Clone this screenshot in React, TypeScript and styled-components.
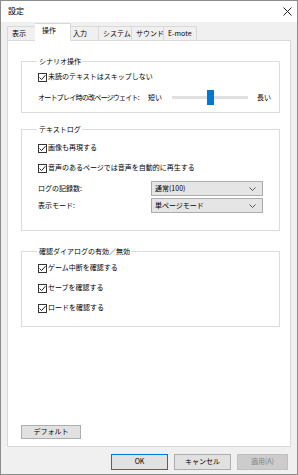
import styled, { createGlobalStyle } from 'styled-components';

const GlobalStyle = createGlobalStyle`
  html, body {
    margin: 0;
    padding: 0;
    background: #ffffff;
  }
  * {
    box-sizing: border-box;
  }
`;

const Window = styled.div`
  width: 298px;
  height: 475px;
  border: 1px solid #8c8c8c;
  background: #f0f0f0;
  display: flex;
  flex-direction: column;
  font-family: 'Noto Sans CJK JP', 'Noto Sans', sans-serif;
  font-size: 7px;
  line-height: 1.3;
  white-space: nowrap;
  color: #000;
`;

const TitleBar = styled.div`
  height: 21px;
  background: #ffffff;
  display: flex;
  align-items: center;
  justify-content: space-between;
  padding: 0 5px 0 7px;
  font-size: 8px;
`;

const CloseIcon = () => (
  <svg width="9" height="9" viewBox="0 0 9 9">
    <path d="M0.5 0.5 L8.5 8.5 M8.5 0.5 L0.5 8.5" stroke="#222" strokeWidth="1" />
  </svg>
);

const TabBar = styled.div`
  display: flex;
  align-items: flex-end;
  height: 18px;
  margin-top: 1px;
  padding-left: 6px;
  position: relative;
  z-index: 1;
`;

const Tab = styled.div<{ $active?: boolean; $w: number }>`
  width: ${(p) => p.$w}px;
  height: ${(p) => (p.$active ? 18 : 15)}px;
  margin: ${(p) => (p.$active ? '0 -2px' : '0')};
  border: 1px solid #d9d9d9;
  border-bottom: ${(p) => (p.$active ? '1px solid #ffffff' : '1px solid #d9d9d9')};
  background: ${(p) => (p.$active ? '#ffffff' : '#f0f0f0')};
  display: flex;
  align-items: center;
  padding-left: ${(p) => (p.$active ? 7 : 4)}px;
  padding-bottom: ${(p) => (p.$active ? 2 : 0)}px;
  position: relative;
  z-index: ${(p) => (p.$active ? 2 : 1)};
  & + & {
    border-left: ${(p) => (p.$active ? '1px solid #d9d9d9' : 'none')};
  }
`;

const Panel = styled.div`
  margin: -1px 6px 0 6px;
  height: 407px;
  background: #ffffff;
  border: 1px solid #d9d9d9;
  display: flex;
  flex-direction: column;
  padding: 15px 10px 7px 13px;
`;

const Group = styled.fieldset<{ $pt?: number; $pb: number; $mt?: number }>`
  margin: ${(p) => p.$mt ?? 0}px 0 0 0;
  border: 1px solid #dcdcdc;
  padding: ${(p) => p.$pt ?? 4}px 8px ${(p) => p.$pb}px 16px;
  display: flex;
  flex-direction: column;
  gap: 6px;
  min-width: 0;
`;

const Legend = styled.legend`
  padding: 0 1px 0 2px;
  margin-left: -1px;
  height: 10px;
  line-height: 10px;
`;

const Row = styled.div<{ $h?: number }>`
  display: flex;
  align-items: center;
  height: ${(p) => p.$h ?? 14}px;
`;

const Box = styled.span`
  width: 9px;
  height: 9px;
  border: 1px solid #333;
  background: #fff;
  display: inline-flex;
  align-items: center;
  justify-content: center;
  margin-right: 1px;
  flex: none;
`;

const Check = ({ label }: { label: string }) => (
  <Row>
    <Box>
      <svg width="7" height="7" viewBox="0 0 7 7">
        <path d="M0.6 3.6 L2.6 5.6 L6.4 1.2" stroke="#222" strokeWidth="1" fill="none" />
      </svg>
    </Box>
    {label}
  </Row>
);

const SliderLabel = styled.span`
  flex: none;
  letter-spacing: -0.75px;
  margin-right: 9px;
`;

const Track = styled.div`
  width: 76px;
  height: 15px;
  margin: 0 9px 0 10px;
  display: flex;
  align-items: center;
  position: relative;
  &::before {
    content: '';
    flex: 1;
    height: 3px;
    background: #e0e0e0;
  }
`;

const Thumb = styled.div`
  position: absolute;
  top: 0;
  width: 7px;
  height: 15px;
  background: #0078d7;
`;

const FieldLabel = styled.span`
  width: 113px;
`;

const Select = styled.div`
  width: 112px;
  height: 15px;
  background: #e5e5e5;
  border: 1px solid #acacac;
  display: flex;
  align-items: center;
  justify-content: space-between;
  padding: 0 6px 0 3px;
`;

const Chevron = () => (
  <svg width="7" height="4" viewBox="0 0 7 4">
    <path d="M0.5 0.5 L3.5 3.5 L6.5 0.5" stroke="#555" strokeWidth="1" fill="none" />
  </svg>
);

const Button = styled.div<{ $variant?: 'default' | 'primary' | 'disabled'; $w?: number }>`
  width: ${(p) => p.$w ?? 57}px;
  height: 16px;
  background: ${(p) => (p.$variant === 'disabled' ? '#cccccc' : '#e1e1e1')};
  border: ${(p) =>
    p.$variant === 'primary'
      ? '1.5px solid #0078d7'
      : p.$variant === 'disabled'
        ? '1px solid #bfbfbf'
        : '1px solid #adadad'};
  color: ${(p) => (p.$variant === 'disabled' ? '#838383' : '#000')};
  display: flex;
  align-items: center;
  justify-content: center;
`;

const DefaultButton = styled(Button)`
  margin-top: auto;
  height: 14px;
`;

const Footer = styled.div`
  display: flex;
  justify-content: flex-end;
  gap: 6px;
  padding: 7px 9px 0 0;
`;

export default function App() {
  return (
    <>
      <GlobalStyle />
      <Window>
        <TitleBar>
          <span>設定</span>
          <CloseIcon />
        </TitleBar>
        <TabBar>
          <Tab $w={30}>表示</Tab>
          <Tab $w={36} $active>
            操作
          </Tab>
          <Tab $w={30}>入力</Tab>
          <Tab $w={33}>システム</Tab>
          <Tab $w={32}>サウンド</Tab>
          <Tab $w={33}>E-mote</Tab>
        </TabBar>
        <Panel>
          <Group $pb={7}>
            <Legend>シナリオ操作</Legend>
            <Check label="未読のテキストはスキップしない" />
            <Row $h={15}>
              <SliderLabel>オートプレイ時の改ページウェイト:</SliderLabel>
              短い
              <Track>
                <Thumb style={{ left: `${(35 / 76) * 100}%` }} />
              </Track>
              長い
            </Row>
          </Group>
          <Group $pt={7} $pb={17} $mt={11}>
            <Legend>テキストログ</Legend>
            <Check label="画像も再現する" />
            <Check label="音声のあるページでは音声を自動的に再生する" />
            <Row $h={15}>
              <FieldLabel>ログの記録数:</FieldLabel>
              <Select>
                通常(100)
                <Chevron />
              </Select>
            </Row>
            <Row $h={15} style={{ marginTop: -4 }}>
              <FieldLabel>表示モード:</FieldLabel>
              <Select>
                単ページモード
                <Chevron />
              </Select>
            </Row>
          </Group>
          <Group $pt={5} $pb={11} $mt={15}>
            <Legend>確認ダイアログの有効／無効</Legend>
            <Check label="ゲーム中断を確認する" />
            <Check label="セーブを確認する" />
            <Check label="ロードを確認する" />
          </Group>
          <DefaultButton $w={60}>デフォルト</DefaultButton>
        </Panel>
        <Footer>
          <Button $variant="primary">OK</Button>
          <Button>キャンセル</Button>
          <Button $variant="disabled" $w={51}>
            適用(A)
          </Button>
        </Footer>
      </Window>
    </>
  );
}
